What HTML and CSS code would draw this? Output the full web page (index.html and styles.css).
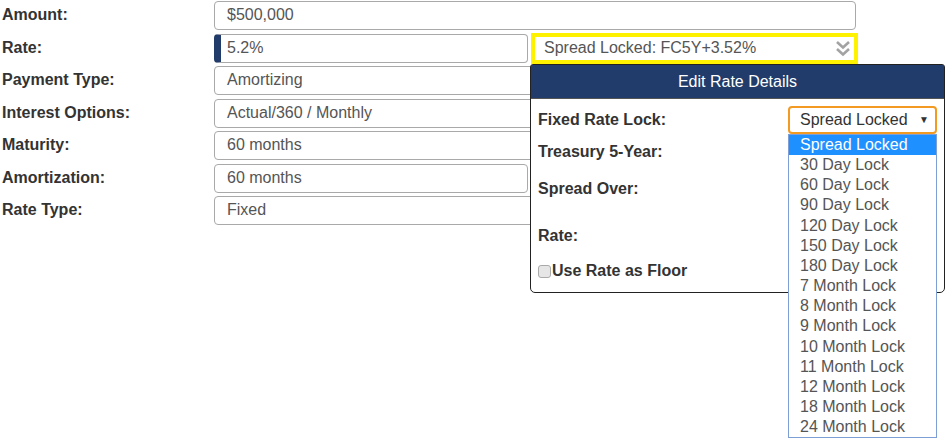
FILE: index.html
```html
<!DOCTYPE html>
<html lang="en">
<head>
    <meta charset="UTF-8">
    <title>Loan Details</title>
    <link rel="stylesheet" href="styles.css">
</head>
<body>
    <div class="form">
        <div class="row">
            <span class="lbl">Amount:</span>
            <div class="field wide">$500,000</div>
        </div>
        <div class="row">
            <span class="lbl">Rate:</span>
            <div class="field half rate">5.2%</div>
            <div class="spread">
                Spread Locked: FC5Y+3.52%
                <svg class="chev" width="16" height="17" viewBox="0 0 16 17">
                    <polyline points="2,2 8,7.5 14,2" />
                    <polyline points="2,9 8,14.5 14,9" />
                </svg>
            </div>
        </div>
        <div class="row">
            <span class="lbl">Payment Type:</span>
            <div class="field wide">Amortizing</div>
        </div>
        <div class="row">
            <span class="lbl">Interest Options:</span>
            <div class="field wide">Actual/360 / Monthly</div>
        </div>
        <div class="row">
            <span class="lbl">Maturity:</span>
            <div class="field wide">60 months</div>
        </div>
        <div class="row">
            <span class="lbl">Amortization:</span>
            <div class="field half">60 months</div>
        </div>
        <div class="row">
            <span class="lbl">Rate Type:</span>
            <div class="field wide">Fixed</div>
        </div>
    </div>

    <!-- Popup zum Bearbeiten der Rate -->
    <div class="popup">
        <div class="popup-head">Edit Rate Details</div>
        <div class="popup-body">
            <div class="prow r1">
                <span class="plbl">Fixed Rate Lock:</span>
                <div class="select">Spread Locked <span class="arrow">&#9660;</span></div>
            </div>
            <div class="prow r2"><span class="plbl">Treasury 5-Year:</span></div>
            <div class="prow r3"><span class="plbl">Spread Over:</span></div>
            <div class="prow r4"><span class="plbl">Rate:</span></div>
            <div class="prow r5">
                <span class="check"></span>
                <span class="plbl">Use Rate as Floor</span>
            </div>
        </div>
        <ul class="options">
            <li class="sel">Spread Locked</li>
            <li>30 Day Lock</li>
            <li>60 Day Lock</li>
            <li>90 Day Lock</li>
            <li>120 Day Lock</li>
            <li>150 Day Lock</li>
            <li>180 Day Lock</li>
            <li>7 Month Lock</li>
            <li>8 Month Lock</li>
            <li>9 Month Lock</li>
            <li>10 Month Lock</li>
            <li>11 Month Lock</li>
            <li>12 Month Lock</li>
            <li>18 Month Lock</li>
            <li>24 Month Lock</li>
        </ul>
    </div>
</body>
</html>
```

FILE: styles.css
```css
* {
    box-sizing: border-box;
    font-family: 'Liberation Sans', Arial, sans-serif;
}

body {
    margin: 0;
    background-color: white;
    color: #333;
    position: relative;
    height: 439px;
    overflow: hidden;
}

.form {
    display: flex;
    flex-direction: column;
    gap: 3.5px;
    padding: 1px 2px 0 2px;
}

.row {
    display: flex;
    align-items: flex-start;
    height: 29px;
}

.lbl {
    width: 212px;
    flex: none;
    font-size: 16px;
    font-weight: bold;
    line-height: 28px;
}

.field {
    height: 29px;
    border: 1px solid #a9a9a9;
    border-radius: 4px;
    padding: 0 12px;
    font-size: 16px;
    line-height: 26px;
    color: #555;
    background: white;
}

.wide {
    width: 642px;
}

.half {
    width: 314px;
}

.rate {
    border-left: 7px solid #213c6a;
    padding-left: 6px;
}

.spread {
    position: relative;
    width: 327px;
    height: 31px;
    margin-left: 3px;
    margin-top: -1px;
    border: 4px solid #fff200;
    padding-left: 9px;
    font-size: 16px;
    line-height: 22px;
    color: #555;
    background: white;
}

.chev {
    position: absolute;
    right: 3px;
    top: 3px;
}

.chev polyline {
    fill: none;
    stroke: #a3a3a3;
    stroke-width: 2.6;
}

.popup {
    position: absolute;
    top: 64px;
    left: 530px;
    width: 415px;
    height: 229px;
    border: 1px solid #222;
    border-radius: 3px 3px 5px 5px;
    background: white;
}

.popup-head {
    height: 34px;
    background-color: #213c6a;
    border-bottom: 1px solid #555;
    color: white;
    text-align: center;
    font-size: 16px;
    line-height: 33px;
}

.popup-body {
    padding: 7px 7px 0 7px;
}

.prow {
    display: flex;
    align-items: center;
}

.r1 {
    height: 28px;
    justify-content: space-between;
}

.r2 {
    height: 36px;
}

.r3 {
    height: 38px;
}

.r4 {
    height: 55px;
}

.r5 {
    height: 16px;
}

.plbl {
    font-size: 16px;
    font-weight: bold;
}

.select {
    position: relative;
    width: 149px;
    height: 28px;
    border: 2px solid #f39a22;
    border-radius: 4px;
    padding-left: 10px;
    font-size: 16px;
    line-height: 24px;
    color: #333;
}

.arrow {
    position: absolute;
    right: 6px;
    top: 0;
    font-size: 10px;
    color: #333;
}

.check {
    width: 13px;
    height: 13px;
    margin-right: 1px;
    border: 1px solid #aaa;
    border-radius: 3px;
    background: #e6e6e6;
}

.options {
    position: absolute;
    top: 69px;
    left: 257px;
    width: 149px;
    margin: 0;
    padding: 0;
    list-style: none;
    border: 1px solid #7d9fd6;
    background: white;
}

.options li {
    font-size: 16px;
    line-height: 20.15px;
    padding-left: 11px;
    color: #555;
}

.options li.sel {
    background-color: #1e90ff;
    color: white;
}
```
